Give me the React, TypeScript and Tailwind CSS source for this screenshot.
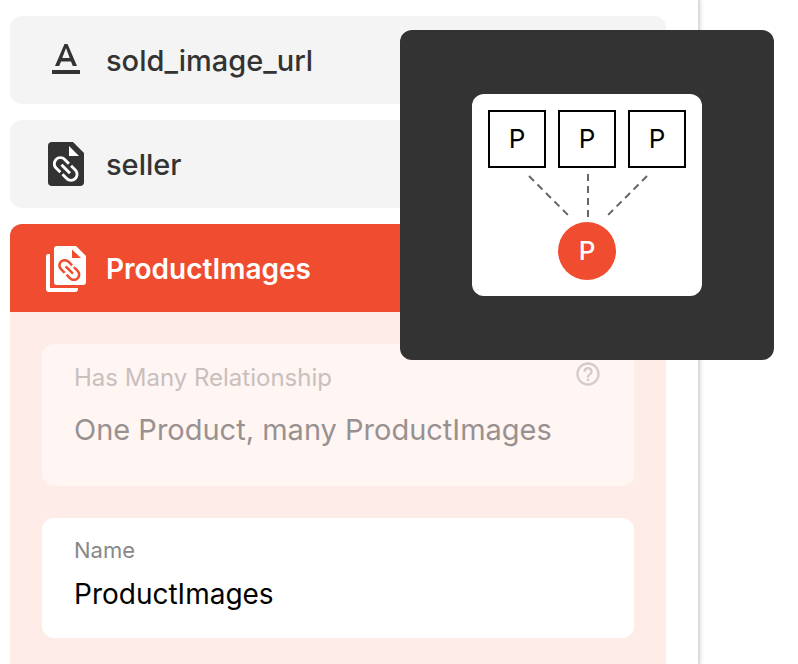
import React from 'react';
import { MdHelpOutline, MdTextFormat } from 'react-icons/md';

const LINK_PATH =
  'M3.9 12c0-1.71 1.39-3.1 3.1-3.1h4V7H7c-2.76 0-5 2.24-5 5s2.24 5 5 5h4v-1.9H7c-1.71 0-3.1-1.39-3.1-3.1zM8 13h8v-2H8v2zm9-6h-4v1.9h4c1.71 0 3.1 1.39 3.1 3.1s-1.39 3.1-3.1 3.1h-4V17h4c2.76 0 5-2.24 5-5s-2.24-5-5-5z';

const FileLinkIcon: React.FC = () => (
  <svg viewBox="0 0 48 48" className="size-12 shrink-0" aria-hidden="true">
    <path fill="#333333" d="M10 2h21l11 11v29a4 4 0 0 1-4 4H10a4 4 0 0 1-4-4V6a4 4 0 0 1 4-4z" />
    <path fill="#ffffff" d="M27 6v10h10z" />
    <path fill="#ffffff" d={LINK_PATH} transform="translate(23.7 29) rotate(45) scale(1.5) translate(-12 -12)" />
  </svg>
);

const FilesLinkIcon: React.FC = () => (
  <svg viewBox="0 0 48 48" className="size-12 shrink-0" aria-hidden="true">
    <path fill="#ffffff" d="M6 10h2v34h28v1a3 3 0 0 1-3 3H7a3 3 0 0 1-3-3V12a2 2 0 0 1 2-2z" />
    <path fill="#ffffff" d="M15 2h19l10 10v26a3 3 0 0 1-3 3H15a3 3 0 0 1-3-3V5a3 3 0 0 1 3-3z" />
    <path fill="#f04d30" d="M30 5.500v8.500h9z" />
    <path fill="#f04d30" d={LINK_PATH} transform="translate(27.3 26) rotate(45) scale(1.3) translate(-12 -12)" />
  </svg>
);

interface FieldRowProps {
  icon: React.ReactNode;
  name: string;
}

const FieldRow: React.FC<FieldRowProps> = ({ icon, name }) => (
  <button
    type="button"
    className="flex h-[88px] w-full items-center gap-4 rounded-xl bg-[#f4f4f4] px-8 text-left text-[29px] font-medium text-[#333333]"
  >
    {icon}
    <span className="pt-0.5">{name}</span>
  </button>
);

const RelationshipDiagram: React.FC = () => (
  <div className="absolute top-[30px] right-6 rounded-xl bg-[#333333] px-[72px] py-16">
    <div className="flex flex-col items-center rounded-xl bg-white p-4 text-[26px]">
      <div className="flex gap-3">
        {[0, 1, 2].map((i) => (
          <div key={i} className="flex size-[58px] items-center justify-center border-2 border-black pb-0.5 text-black">
            P
          </div>
        ))}
      </div>
      <svg viewBox="0 0 198 54" className="h-[54px] w-full" aria-hidden="true">
        <g stroke="#666666" strokeWidth="2" strokeDasharray="7 5" fill="none">
          <path d="M41 8l40 40" />
          <path d="M100 6v43" />
          <path d="M159 8l-40 40" />
        </g>
      </svg>
      <div className="flex size-[58px] items-center justify-center rounded-full bg-[#f04d30] pb-0.5 font-medium text-white">
        P
      </div>
    </div>
  </div>
);

const App: React.FC = () => {
  return (
    <div className="relative flex min-h-screen bg-white font-['Inter','Liberation_Sans',sans-serif]">
      <main className="flex flex-1 flex-col gap-4 border-r-2 border-[#dcdcdc] pt-4 pr-8 pl-[10px] shadow-[1px_0_4px_rgba(0,0,0,0.12)]">
        <FieldRow icon={<MdTextFormat className="size-12 shrink-0" />} name="sold_image_url" />
        <FieldRow icon={<FileLinkIcon />} name="seller" />

        <section className="flex flex-1 flex-col">
          <button
            type="button"
            className="flex h-[88px] w-full items-center gap-4 rounded-t-xl bg-[#f04d30] px-8 text-left text-[28px] font-semibold text-white"
          >
            <FilesLinkIcon />
            <span className="pt-0.5">ProductImages</span>
          </button>

          <div className="flex flex-1 flex-col gap-8 bg-[#feece8] px-8 pt-8 pb-6">
            <div className="h-[142px] rounded-xl bg-[#fff5f3] px-8 pt-4">
              <div className="flex items-start justify-between">
                <h3 className="text-2xl leading-9 text-[#c9bfbd]">Has Many Relationship</h3>
                <button type="button" aria-label="Help" className="text-[#d6cac8]">
                  <MdHelpOutline className="size-7" />
                </button>
              </div>
              <p className="mt-4 text-[29px] leading-9 text-[#999190]">One Product, many ProductImages</p>
            </div>

            <div className="flex h-[120px] flex-col rounded-xl bg-white px-8 pt-4">
              <label htmlFor="field-name" className="text-[22px] leading-8 text-[#888888]">
                Name
              </label>
              <input
                id="field-name"
                type="text"
                defaultValue="ProductImages"
                className="mt-2 w-full bg-transparent text-[28px] leading-10 text-black outline-none"
              />
            </div>
          </div>
        </section>
      </main>
      <aside className="w-[98px]" />

      <RelationshipDiagram />
    </div>
  );
};

export default App;
